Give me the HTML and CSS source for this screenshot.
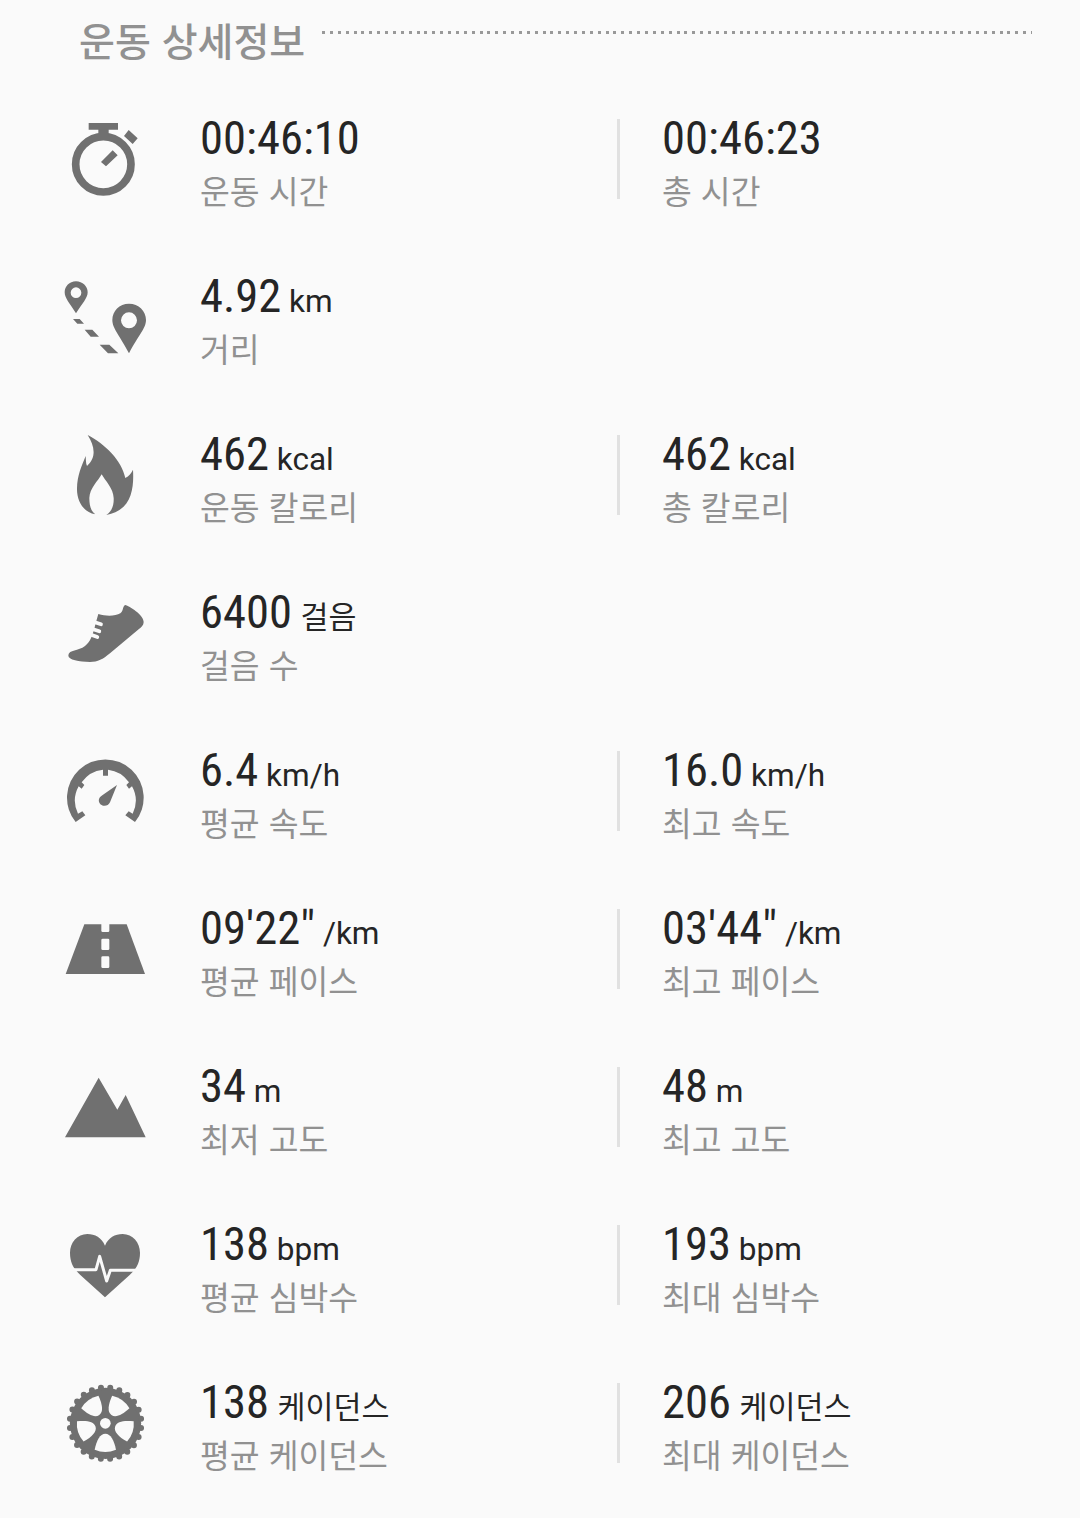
FILE: index.html
```html
<!DOCTYPE html>
<html lang="ko">
<head>
    <meta charset="UTF-8">
    <meta name="viewport" content="width=device-width, initial-scale=1.0">
    <title>운동 상세정보</title>
    <link rel="stylesheet" href="styles.css">
</head>
<body>
    <div class="header">
        <h1>운동 상세정보</h1>
        <div class="dots"></div>
    </div>

    <div class="details">
        <!-- Time -->
        <div class="row">
            <svg class="icon" viewBox="0 312 330 330">
                <circle cx="160" cy="493" r="83" fill="none" stroke="#707070" stroke-width="23"/>
                <path d="M116 369H204V389H176V408H145V389H116ZM236 390L263 415L248 432L222 408ZM188 451L203 466L168 499L153 486Z"/>
            </svg>
            <div class="item">
                <div class="value">00:46:10</div>
                <div class="label">운동 시간</div>
            </div>
            <div class="item second">
                <div class="value">00:46:23</div>
                <div class="label">총 시간</div>
            </div>
        </div>

        <!-- Distance -->
        <div class="row">
            <svg class="icon" viewBox="0 -9 330 330">
                <path fill-rule="evenodd" d="M78 49C58 49 44 64 44 82C44 100 59 114 78 145C97 114 113 100 113 82C113 64 98 49 78 49ZM78 67A16 16 0 1 1 78 99A16 16 0 1 1 78 67Z"/>
                <path fill-rule="evenodd" d="M237 116C208 116 187 138 187 165C187 190 209 211 237 265C265 211 288 190 288 165C288 138 266 116 237 116ZM237 142A24 24 0 1 1 237 190A24 24 0 1 1 237 142Z"/>
                <path d="M69 162H89L102 176H82ZM104 194H127L147 215H122ZM149 239H178L205 265H174Z"/>
            </svg>
            <div class="item">
                <div class="value">4.92<span> km</span></div>
                <div class="label">거리</div>
            </div>
        </div>

        <!-- Calories -->
        <div class="row">
            <svg class="icon" viewBox="0 -15 330 330">
                <path d="M113 30C165 57 215 106 226 159C237 153 244 145 249 134C252 187 247 256 169 270C187 258 192 239 191 219C190 190 166 168 155 148C144 168 119 190 118 219C118 242 123 259 136 268C100 262 80 228 81 190C82 151 94 125 107 93C108 104 107 115 111 123C141 96 133 62 113 30Z"/>
            </svg>
            <div class="item">
                <div class="value">462<span> kcal</span></div>
                <div class="label">운동 칼로리</div>
            </div>
            <div class="item second">
                <div class="value">462<span> kcal</span></div>
                <div class="label">총 칼로리</div>
            </div>
        </div>

        <!-- Steps -->
        <div class="row">
            <svg class="icon" viewBox="0 -36 330 330">
                <path d="M145 72C170 80 197 78 211 70C221 63 217 48 226 45C248 53 282 79 281 96C281 105 274 112 266 118L180 190C158 208 144 216 120 216C88 216 54 210 55 196C57 178 85 184 105 168C121 155 127 138 134 112C137 99 141 85 145 72Z"/>
                <path class="cut" d="M132 96L153 103M127 117L148 124M123 134L142 141"/>
            </svg>
            <div class="item">
                <div class="value">6400<span class="ko"> 걸음</span></div>
                <div class="label">걸음 수</div>
            </div>
        </div>

        <!-- Speed -->
        <div class="row">
            <svg class="icon" viewBox="0 -27 330 330">
                <path d="M77 231A115 115 0 1 1 255 231L226 211L236 199L248 206A89 89 0 0 0 246 124L237 131L229 120L237 112A89 89 0 0 0 174 74V92H159V74A89 89 0 0 0 95 112L103 120L95 131L86 124A89 89 0 0 0 84 206L97 199L106 211Z"/>
                <path d="M201 120L180 172C176 181 167 184 159 182C148 179 144 168 148 160C150 155 154 153 158 150Z"/>
            </svg>
            <div class="item">
                <div class="value">6.4<span> km/h</span></div>
                <div class="label">평균 속도</div>
            </div>
            <div class="item second">
                <div class="value">16.0<span> km/h</span></div>
                <div class="label">최고 속도</div>
            </div>
        </div>

        <!-- Pace -->
        <div class="row">
            <svg class="icon" viewBox="0 -48 330 330">
                <path d="M103 43H230L285 192H47Z"/>
                <path class="gap" d="M154 40H178V62Q178 66 174 66H158Q154 66 154 62Z"/>
                <rect class="gap" x="154" y="86" width="24" height="34" rx="4"/>
                <rect class="gap" x="154" y="139" width="24" height="35" rx="4"/>
            </svg>
            <div class="item">
                <div class="value">09'22"<span> /km</span></div>
                <div class="label">평균 페이스</div>
            </div>
            <div class="item second">
                <div class="value">03'44"<span> /km</span></div>
                <div class="label">최고 페이스</div>
            </div>
        </div>

        <!-- Elevation -->
        <div class="row">
            <svg class="icon" viewBox="0 -39 330 330">
                <path d="M146 38L202 134L227 90L287 217H45Z"/>
            </svg>
            <div class="item">
                <div class="value">34<span> m</span></div>
                <div class="label">최저 고도</div>
            </div>
            <div class="item second">
                <div class="value">48<span> m</span></div>
                <div class="label">최고 고도</div>
            </div>
        </div>

        <!-- Heart rate -->
        <div class="row">
            <svg class="icon" viewBox="0 -30 330 330">
                <path d="M165 77C155 53 135 42 112 42C82 42 60 68 60 98C60 130 73 148 91 165L165 232L239 165C257 148 270 130 270 98C270 68 248 42 218 42C195 42 175 53 165 77Z"/>
                <path class="pulse" d="M66 149H138L149 109L170 183L181 151H264"/>
            </svg>
            <div class="item">
                <div class="value">138<span> bpm</span></div>
                <div class="label">평균 심박수</div>
            </div>
            <div class="item second">
                <div class="value">193<span> bpm</span></div>
                <div class="label">최대 심박수</div>
            </div>
        </div>

        <!-- Cadence -->
        <div class="row">
            <svg class="icon" viewBox="0 -6 330 330">
                <defs>
                    <path id="hole" d="M166 191C150 191 140 210 134 239Q166 253 198 239C192 210 182 191 166 191Z"/>
                </defs>
                <circle cx="166.500" cy="160" r="107"/>
                <circle class="teeth" cx="166.500" cy="160" r="107.500" pathLength="48"/>
                <g class="gap">
                    <circle cx="166" cy="160" r="16"/>
                    <use href="#hole"/>
                    <use href="#hole" transform="rotate(72 166 160)"/>
                    <use href="#hole" transform="rotate(144 166 160)"/>
                    <use href="#hole" transform="rotate(216 166 160)"/>
                    <use href="#hole" transform="rotate(288 166 160)"/>
                </g>
            </svg>
            <div class="item">
                <div class="value">138<span class="ko"> 케이던스</span></div>
                <div class="label">평균 케이던스</div>
            </div>
            <div class="item second">
                <div class="value">206<span class="ko"> 케이던스</span></div>
                <div class="label">최대 케이던스</div>
            </div>
        </div>
    </div>
</body>
</html>
```
FILE: styles.css
```css
* {
    box-sizing: border-box;
}

body {
    margin: 0;
    background-color: #fafafa;
    font-family: Roboto, "Noto Sans CJK KR", sans-serif;
    color: #252525;
}

/* Section title with dotted line */
.header {
    display: flex;
    height: 80px;
    padding: 10px 48px 0 79px;
}

h1 {
    width: 243px;
    margin: 0;
    font-family: "Noto Sans CJK KR", sans-serif;
    font-size: 39px;
    font-weight: 500;
    line-height: 58px;
    color: #919191;
    white-space: nowrap;
}

.dots {
    flex: 1;
    height: 3px;
    margin-top: 21px;
    background: repeating-linear-gradient(to right, #999 0, #999 3px, transparent 3px, transparent 7.878px);
}

/* Detail rows */
.row {
    display: grid;
    grid-template-columns: 110px 417px 1fr;
    column-gap: 40px;
    height: 158px;
    padding-left: 50px;
}

.icon {
    width: 110px;
    height: 110px;
    margin-top: 24px;
    fill: #707070;
}

.item {
    padding-top: 30px;
}

.second {
    position: relative;
    margin-left: -40px;
    padding-left: 45px;
}

.second::before {
    content: "";
    position: absolute;
    left: 0;
    top: 39px;
    width: 3px;
    height: 80px;
    background-color: #e1e1e1;
}

.value {
    height: 56px;
    font-family: "Roboto Condensed", Roboto, "Noto Sans CJK KR", sans-serif;
    font-size: 46.6px;
    font-stretch: condensed;
    line-height: 56px;
    white-space: nowrap;
}

.value span {
    font-family: Roboto, "Noto Sans CJK KR", sans-serif;
    font-size: 31.5px;
    font-stretch: normal;
}

.value .ko {
    font-size: 30.4px;
    word-spacing: 1px;
}

.label {
    font-family: "Noto Sans CJK KR", sans-serif;
    font-size: 32.4px;
    line-height: 48px;
    color: #919191;
}

/* Icon details */
.gap {
    fill: #fafafa;
}

.cut {
    fill: none;
    stroke: #fafafa;
    stroke-width: 11;
    stroke-linecap: round;
}

.pulse {
    fill: none;
    stroke: #fafafa;
    stroke-width: 9;
    stroke-linejoin: round;
}

.teeth {
    fill: none;
    stroke: #707070;
    stroke-width: 18;
    stroke-linecap: round;
    stroke-dasharray: 0 2;
    stroke-dashoffset: 1;
}
```
